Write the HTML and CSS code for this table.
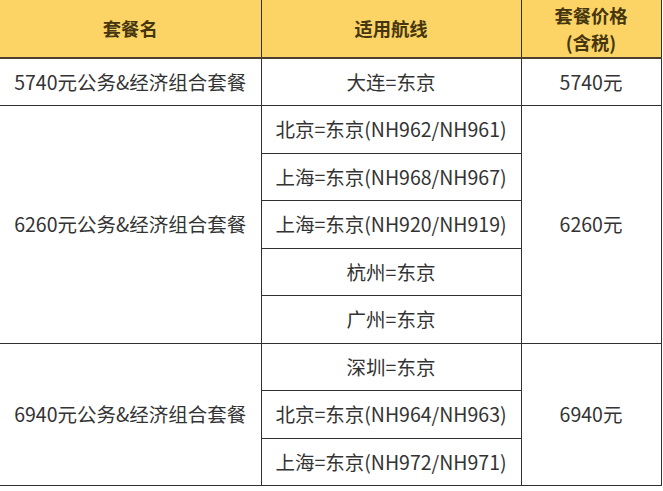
FILE: index.html
```html
<!DOCTYPE html>
<html lang="zh">
<head>
<meta charset="utf-8">
<link rel="stylesheet" href="styles.css">
</head>
<body>
<table class="plans">
  <colgroup>
    <col class="c-name">
    <col class="c-route">
    <col class="c-price">
  </colgroup>
  <thead>
    <tr class="head">
      <th>套餐名</th>
      <th>适用航线</th>
      <th>套餐价格<br>(含税)</th>
    </tr>
  </thead>
  <tbody>
    <tr>
      <td>5740元公务&amp;经济组合套餐</td>
      <td>大连=东京</td>
      <td>5740元</td>
    </tr>
    <tr>
      <td rowspan="5">6260元公务&amp;经济组合套餐</td>
      <td>北京=东京(NH962/NH961)</td>
      <td rowspan="5">6260元</td>
    </tr>
    <tr><td>上海=东京(NH968/NH967)</td></tr>
    <tr><td>上海=东京(NH920/NH919)</td></tr>
    <tr><td>杭州=东京</td></tr>
    <tr><td>广州=东京</td></tr>
    <tr>
      <td rowspan="3">6940元公务&amp;经济组合套餐</td>
      <td>深圳=东京</td>
      <td rowspan="3">6940元</td>
    </tr>
    <tr><td>北京=东京(NH964/NH963)</td></tr>
    <tr><td>上海=东京(NH972/NH971)</td></tr>
  </tbody>
</table>
</body>
</html>
```

FILE: styles.css
```css
html, body {
  margin: 0;
  padding: 0;
  background: #ffffff;
}

body {
  font-family: "Noto Sans CJK SC", "Noto Sans", sans-serif;
  color: #333333;
}

.plans {
  border-collapse: collapse;
  table-layout: fixed;
  width: 661px;
}

.c-name { width: 261px; }
.c-route { width: 260px; }
.c-price { width: 140px; }

.plans th,
.plans td {
  border: 1.5px solid #303030;
  text-align: center;
  vertical-align: middle;
  padding: 0;
  white-space: nowrap;
}

.plans th {
  background: #fbd465;
  color: #45360f;
  font-weight: 700;
  font-size: 18.3px;
  line-height: 27px;
  height: 57px;
  border-top: none;
  border-bottom: 2px solid #4a4030;
}

.plans tr > :first-child {
  border-left: none;
}

.plans td {
  height: 46px;
  font-weight: 400;
  font-size: 19.5px;
  line-height: 26px;
}

.plans tbody tr {
  height: 47.5px;
}
```
